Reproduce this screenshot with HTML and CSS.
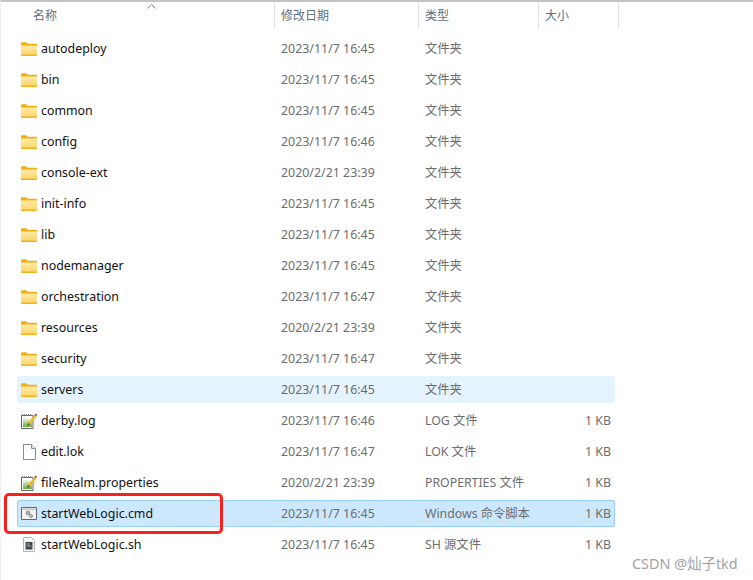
FILE: index.html
```html
<!DOCTYPE html>
<html lang="en">
<head>
  <meta charset="UTF-8" />
  <title>文件列表</title>
  <link rel="stylesheet" href="styles.css">
</head>
<body>
  <svg width="0" height="0" class="defs">
    <defs>
      <linearGradient id="folderFill" x1="0" y1="0" x2="0" y2="1">
        <stop offset="0" stop-color="#ffeaa6"/>
        <stop offset="1" stop-color="#fdd466"/>
      </linearGradient>
      <linearGradient id="noteFill" x1="0" y1="0" x2="0" y2="1">
        <stop offset="0" stop-color="#f4f8ea"/>
        <stop offset="1" stop-color="#5fae3a"/>
      </linearGradient>
      <symbol id="folder" viewBox="0 0 16 14">
        <path d="M0 1.5C0 .7.5.2 1.2.2h4l1.6 1.6H15c.6 0 1 .4 1 1V5H0z" fill="#f2ae0c"/>
        <path d="M0 3.6h16v9.2c0 .6-.4 1-1 1H1c-.6 0-1-.4-1-1z" fill="url(#folderFill)"/>
        <path d="M0 12.6h16v.4c0 .6-.4.9-1 .9H1c-.6 0-1-.3-1-.9z" fill="#f2b21c"/>
      </symbol>
      <symbol id="note" viewBox="0 0 16 16">
        <path d="M.5 2.5h11.5v13H.5z" fill="#fff" stroke="#666"/>
        <path d="M2 5h9v9H2z" fill="url(#noteFill)"/>
        <path d="M1.5 1v2M3.5 1v2M5.5 1v2M7.5 1v2M9.5 1v2" stroke="#777" stroke-width=".8"/>
        <path d="M6 13l1-3 6.500-8 2 1.600-6.500 8z" fill="#f3b52a"/>
        <path d="M13.500 2l1-1.500 1.500 1.200-1 1.500z" fill="#a1342a"/>
        <path d="M6 13l1-3 2 1.600z" fill="#5a4a2a"/>
      </symbol>
      <symbol id="blank" viewBox="0 0 13 16">
        <path d="M.5.5h8l4 4v11H.5z" fill="#fff" stroke="#8a8a8a"/>
        <path d="M8.500.5v4h4" fill="#f0f0f0" stroke="#8a8a8a"/>
      </symbol>
      <symbol id="cmd" viewBox="0 0 16 13">
        <path d="M.5.5h15v12H.5z" fill="#f4f4f4" stroke="#666"/>
        <path d="M1.500 1.500h13v1.500h-13z" fill="#c9c9c9"/>
        <circle cx="7" cy="6" r="2" fill="#a8a8a8" stroke="#777" stroke-width=".6"/>
        <circle cx="10" cy="9" r="1.600" fill="#b8b8b8" stroke="#777" stroke-width=".6"/>
      </symbol>
      <symbol id="shell" viewBox="0 0 12 15">
        <path d="M.5.5h8l3 3v11H.500z" fill="#f6f6f6" stroke="#b5b5b5"/>
        <path d="M2.500 5h7v7.500h-7z" fill="#3c4a50"/>
        <path d="M3.500 7h3.500M3.500 9h5" stroke="#b9c4c8" stroke-width=".8"/>
      </symbol>
    </defs>
  </svg>

  <div class="explorer">
    <div class="header">
      <div class="col-head col-name"><span class="sort-arrow"><svg width="9" height="5" viewBox="0 0 9 5"><path d="M.5 4.500l4-4 4 4" fill="none" stroke="#8a8a8a"/></svg></span>名称</div>
      <div class="col-head">修改日期</div>
      <div class="col-head">类型</div>
      <div class="col-head">大小</div>
    </div>

    <div class="rows">
      <div class="row"><span class="name"><svg class="ico ico-folder"><use href="#folder"/></svg>autodeploy</span><span class="date">2023/11/7 16:45</span><span class="type">文件夹</span><span class="size"></span></div>
      <div class="row"><span class="name"><svg class="ico ico-folder"><use href="#folder"/></svg>bin</span><span class="date">2023/11/7 16:45</span><span class="type">文件夹</span><span class="size"></span></div>
      <div class="row"><span class="name"><svg class="ico ico-folder"><use href="#folder"/></svg>common</span><span class="date">2023/11/7 16:45</span><span class="type">文件夹</span><span class="size"></span></div>
      <div class="row"><span class="name"><svg class="ico ico-folder"><use href="#folder"/></svg>config</span><span class="date">2023/11/7 16:46</span><span class="type">文件夹</span><span class="size"></span></div>
      <div class="row"><span class="name"><svg class="ico ico-folder"><use href="#folder"/></svg>console-ext</span><span class="date">2020/2/21 23:39</span><span class="type">文件夹</span><span class="size"></span></div>
      <div class="row"><span class="name"><svg class="ico ico-folder"><use href="#folder"/></svg>init-info</span><span class="date">2023/11/7 16:45</span><span class="type">文件夹</span><span class="size"></span></div>
      <div class="row"><span class="name"><svg class="ico ico-folder"><use href="#folder"/></svg>lib</span><span class="date">2023/11/7 16:45</span><span class="type">文件夹</span><span class="size"></span></div>
      <div class="row"><span class="name"><svg class="ico ico-folder"><use href="#folder"/></svg>nodemanager</span><span class="date">2023/11/7 16:45</span><span class="type">文件夹</span><span class="size"></span></div>
      <div class="row"><span class="name"><svg class="ico ico-folder"><use href="#folder"/></svg>orchestration</span><span class="date">2023/11/7 16:47</span><span class="type">文件夹</span><span class="size"></span></div>
      <div class="row"><span class="name"><svg class="ico ico-folder"><use href="#folder"/></svg>resources</span><span class="date">2020/2/21 23:39</span><span class="type">文件夹</span><span class="size"></span></div>
      <div class="row"><span class="name"><svg class="ico ico-folder"><use href="#folder"/></svg>security</span><span class="date">2023/11/7 16:47</span><span class="type">文件夹</span><span class="size"></span></div>
      <div class="row hovered"><span class="name"><svg class="ico ico-folder"><use href="#folder"/></svg>servers</span><span class="date">2023/11/7 16:45</span><span class="type">文件夹</span><span class="size"></span></div>
      <div class="row"><span class="name"><svg class="ico ico-note"><use href="#note"/></svg>derby.log</span><span class="date">2023/11/7 16:46</span><span class="type">LOG 文件</span><span class="size">1 KB</span></div>
      <div class="row"><span class="name"><svg class="ico ico-blank"><use href="#blank"/></svg>edit.lok</span><span class="date">2023/11/7 16:47</span><span class="type">LOK 文件</span><span class="size">1 KB</span></div>
      <div class="row"><span class="name"><svg class="ico ico-note"><use href="#note"/></svg>fileRealm.properties</span><span class="date">2020/2/21 23:39</span><span class="type">PROPERTIES 文件</span><span class="size">1 KB</span></div>
      <div class="row selected"><span class="name"><svg class="ico ico-cmd"><use href="#cmd"/></svg>startWebLogic.cmd</span><span class="date">2023/11/7 16:45</span><span class="type">Windows 命令脚本</span><span class="size">1 KB</span></div>
      <div class="row"><span class="name"><svg class="ico ico-shell"><use href="#shell"/></svg>startWebLogic.sh</span><span class="date">2023/11/7 16:45</span><span class="type">SH 源文件</span><span class="size">1 KB</span></div>
    </div>
  </div>

  <div class="red-box"></div>
  <div class="watermark">CSDN @灿子tkd</div>
</body>
</html>
```

FILE: styles.css
```css
* {
  box-sizing: border-box;
}

html, body {
  height: 100%;
}

body {
  margin: 0;
  background: #fff;
  font-family: "Noto Sans", "Noto Sans CJK SC", sans-serif;
  font-size: 12.4px;
  color: #6d6d6d;
  overflow: hidden;
}

.defs {
  position: absolute;
}

.explorer {
  height: 100%;
  border-top: 2px solid #c4c4c4;
  border-left: 1px solid #f0f0f0;
}

.header {
  display: grid;
  grid-template-columns: 274px 144px 120px 80px;
  height: 27px;
}

.col-head {
  position: relative;
  padding: 5px 0 0 6px;
  font-size: 12px;
  line-height: 18px;
  color: #5f6f80;
  border-right: 1px solid #e3e3e3;
}

.col-name {
  padding-left: 32px;
}

.sort-arrow {
  position: absolute;
  left: 146px;
  top: 0;
  line-height: 5px;
}

.rows {
  display: flex;
  flex-direction: column;
  gap: 4px;
  margin: 6px 0 0 16px;
  width: 598px;
}

.row {
  display: grid;
  grid-template-columns: 257px 144px 120px 1fr;
  height: 27px;
  align-items: center;
  border: 1px solid transparent;
  border-radius: 2px;
}

.row.hovered {
  background: #e5f3ff;
  border-color: #e5f3ff;
}

.row.selected {
  background: #cce8ff;
  border-color: #99d1ff;
}

.name {
  display: flex;
  align-items: center;
  padding-left: 3px;
  color: #111;
}

.ico {
  flex: none;
  margin-right: 4px;
}

.ico-folder {
  width: 16px;
  height: 14px;
}

.ico-note {
  width: 16px;
  height: 16px;
}

.ico-blank {
  width: 13px;
  height: 16px;
  margin-left: 2px;
  margin-right: 5px;
}

.ico-cmd {
  width: 16px;
  height: 13px;
}

.ico-shell {
  width: 12px;
  height: 15px;
  margin-left: 2px;
  margin-right: 6px;
}

.date {
  padding-left: 6px;
}

.type {
  padding-left: 6px;
  font-size: 12.3px;
  margin-top: -1px;
}

.size {
  text-align: right;
  padding-right: 3px;
}

/* annotation drawn on top of the screenshot */
.red-box {
  position: absolute;
  left: 4px;
  top: 493px;
  width: 219px;
  height: 41px;
  border: 3px solid #f5211c;
  border-radius: 5px;
}

.watermark {
  position: absolute;
  left: 632px;
  top: 554px;
  font-size: 14.4px;
  line-height: 20px;
  color: #a3a3a3;
  white-space: nowrap;
}
```
